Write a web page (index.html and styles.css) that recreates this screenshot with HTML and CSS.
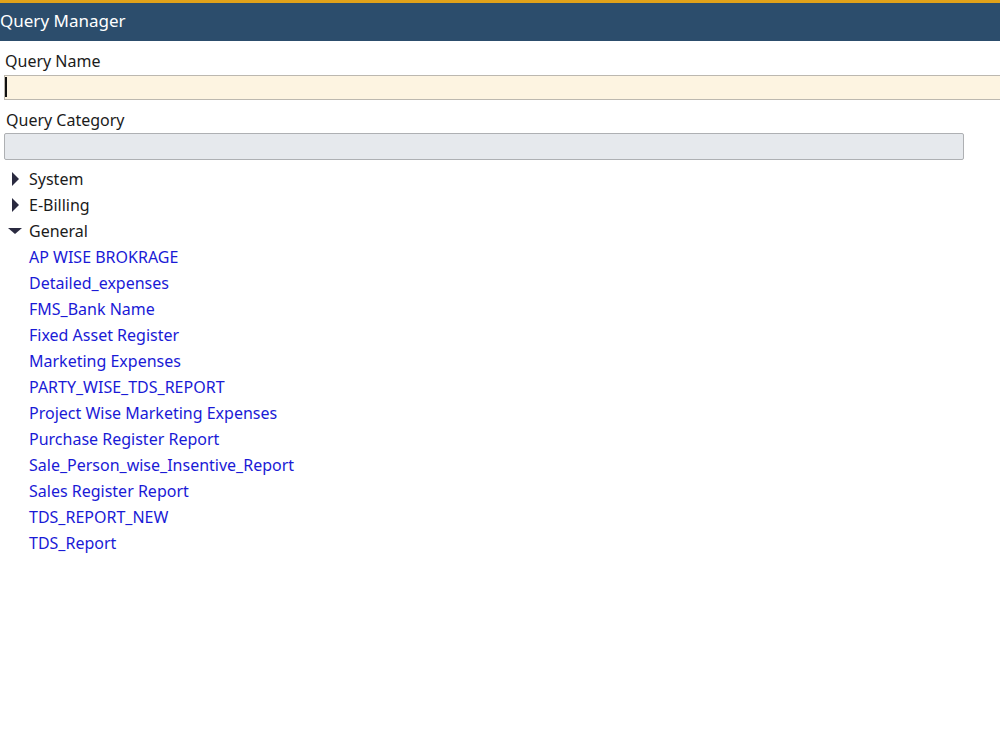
FILE: index.html
```html
<!DOCTYPE html>
<html lang="en">
<head>
    <meta charset="UTF-8">
    <title>Query Manager</title>
    <link rel="stylesheet" href="styles.css">
</head>
<body>
    <div class="title-bar">Query Manager</div>

    <div class="panel">
        <label class="field-label name-label">Query Name</label>
        <div class="name-wrap">
            <input type="text" class="name-input">
            <span class="caret"></span>
        </div>

        <label class="field-label cat-label">Query Category</label>
        <div class="cat-input"></div>

        <ul class="tree">
            <li class="node"><span class="arrow closed"></span>System</li>
            <li class="node"><span class="arrow closed"></span>E-Billing</li>
            <li class="node"><span class="arrow open"></span>General</li>
            <li class="leaf"><a href="#">AP WISE BROKRAGE</a></li>
            <li class="leaf"><a href="#">Detailed_expenses</a></li>
            <li class="leaf"><a href="#">FMS_Bank Name</a></li>
            <li class="leaf"><a href="#">Fixed Asset Register</a></li>
            <li class="leaf"><a href="#">Marketing Expenses</a></li>
            <li class="leaf"><a href="#">PARTY_WISE_TDS_REPORT</a></li>
            <li class="leaf"><a href="#">Project Wise Marketing Expenses</a></li>
            <li class="leaf"><a href="#">Purchase Register Report</a></li>
            <li class="leaf"><a href="#">Sale_Person_wise_Insentive_Report</a></li>
            <li class="leaf"><a href="#">Sales Register Report</a></li>
            <li class="leaf"><a href="#">TDS_REPORT_NEW</a></li>
            <li class="leaf"><a href="#">TDS_Report</a></li>
        </ul>
    </div>
</body>
</html>
```

FILE: styles.css
```css
body {
    margin: 0;
    font-family: 'Noto Sans', sans-serif;
    color: #1b1b1b;
    background: white;
    overflow: hidden;
}

.title-bar {
    border-top: 3px solid #e1a21a;
    background: #2c4d6c;
    color: white;
    font-size: 17px;
    height: 38px;
    line-height: 36px;
}

.panel {
    padding: 9px 0 0 4px;
}

.field-label {
    display: block;
    font-size: 16px;
    line-height: 22px;
}

.name-label {
    padding-left: 1px;
    margin-bottom: 3px;
}

.name-wrap {
    position: relative;
    width: 1010px;
}

.name-input {
    display: block;
    width: 100%;
    height: 25px;
    box-sizing: border-box;
    border: 1px solid #bcb8b0;
    background: #fdf4e1;
    font-size: 16px;
    padding: 0 1px;
    margin: 0;
    outline: none;
}

.caret {
    position: absolute;
    left: 1px;
    top: 2px;
    width: 2px;
    height: 20px;
    background: #111;
}

.cat-label {
    padding-left: 2px;
    margin-top: 9px;
    margin-bottom: 2px;
}

.cat-input {
    width: 960px;
    height: 27px;
    box-sizing: border-box;
    border: 1px solid #aeb0b3;
    border-radius: 2px;
    background: #e6e9ed;
}

.tree {
    list-style: none;
    margin: 6px 0 0 0;
    padding: 0;
    font-size: 16px;
}

.tree li {
    height: 26px;
    line-height: 26px;
    display: flex;
    align-items: center;
}

.node {
    padding-left: 3px;
}

.leaf {
    padding-left: 25px;
}

.leaf a {
    color: #1a1ad6;
    text-decoration: none;
}

.arrow {
    width: 22px;
    height: 14px;
    position: relative;
}

.arrow.closed::before {
    content: '';
    position: absolute;
    left: 5px;
    top: 0;
    border-top: 7px solid transparent;
    border-bottom: 7px solid transparent;
    border-left: 7px solid #2a2a40;
}

.arrow.open::before {
    content: '';
    position: absolute;
    left: 1px;
    top: 4px;
    border-left: 7px solid transparent;
    border-right: 7px solid transparent;
    border-top: 6px solid #2a2a40;
}
```
